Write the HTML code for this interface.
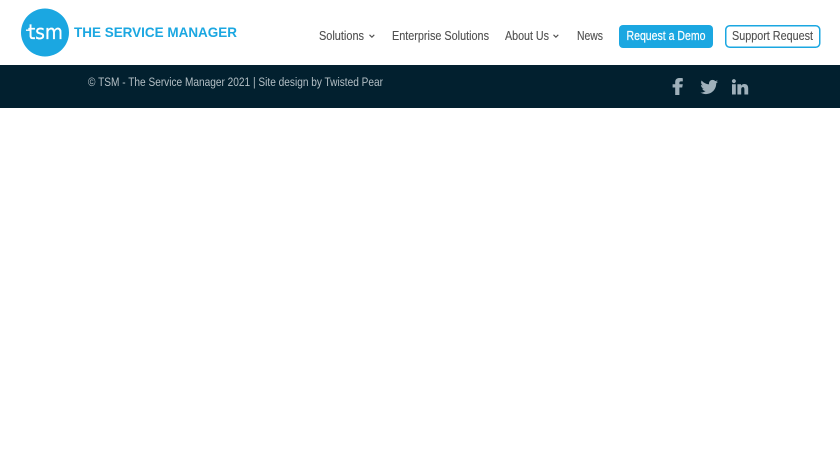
<!DOCTYPE html>
<html lang="en">
<head>
<meta charset="utf-8">
<title>TSM - The Service Manager</title>
<style>
html,body{margin:0;padding:0;background:#fff;width:840px;height:472px;overflow:hidden}
svg{display:block}
.nav{font-family:"Liberation Sans",sans-serif;font-size:12.6px;fill:#505050;stroke:#505050;stroke-width:.12px}
</style>
</head>
<body>
<svg width="840" height="472" viewBox="0 0 840 472" xmlns="http://www.w3.org/2000/svg">
<rect width="840" height="472" fill="#fff"/>
<circle cx="45" cy="32.5" r="24" fill="#1ba7e1"/>
<text x="28" y="39" font-family="DejaVu Sans,sans-serif" font-size="20" fill="#fff" stroke="#fff" stroke-width=".3" textLength="35" lengthAdjust="spacingAndGlyphs">tsm</text>
<path d="M26 30.2h4" stroke="#fff" stroke-width="1.4"/>
<text x="74" y="37.2" font-family="Liberation Sans,sans-serif" font-weight="700" font-size="13.6" fill="#1ba7e1" textLength="163" lengthAdjust="spacingAndGlyphs">THE SERVICE MANAGER</text>

<text class="nav" x="319" y="40" textLength="45" lengthAdjust="spacingAndGlyphs">Solutions</text>
<path d="M369.5 34.8l2.4 2.4 2.4-2.4" fill="none" stroke="#505050" stroke-width="1.1"/>
<text class="nav" x="392" y="40" textLength="97" lengthAdjust="spacingAndGlyphs">Enterprise Solutions</text>
<text class="nav" x="505" y="40" textLength="44" lengthAdjust="spacingAndGlyphs">About Us</text>
<path d="M553.5 34.8l2.4 2.4 2.4-2.4" fill="none" stroke="#505050" stroke-width="1.1"/>
<text class="nav" x="577" y="40" textLength="26" lengthAdjust="spacingAndGlyphs">News</text>

<rect x="619" y="25" width="94" height="23" rx="4" fill="#1ba7e1"/>
<text x="626.5" y="40" font-family="Liberation Sans,sans-serif" font-size="12.6" fill="#fff" stroke="#fff" stroke-width=".2" textLength="79" lengthAdjust="spacingAndGlyphs">Request a Demo</text>
<rect x="725.75" y="25.75" width="94" height="21.5" rx="4" fill="#fff" stroke="#1ba7e1" stroke-width="1.5"/>
<text class="nav" x="732" y="40" textLength="81" lengthAdjust="spacingAndGlyphs">Support Request</text>

<rect x="0" y="65" width="840" height="43" fill="#02202f"/>
<text x="88" y="86" font-family="Liberation Sans,sans-serif" font-size="12.4" fill="#b4bfc5" textLength="295" lengthAdjust="spacingAndGlyphs">© TSM - The Service Manager 2021 | Site design by Twisted Pear</text>

<path d="M675.2 95V87.5H672.6V84.2H675.2V82C675.2 79.3 677 78 679.6 78C680.9 78 682 78.1 682.8 78.2V81.4H681C679.8 81.4 679.4 81.9 679.4 82.8V84.2H682.8L682.2 87.5H679.4V95Z" fill="#9fb0ba"/>
<path d="M718 81.6C717.3 81.9 716.6 82.1 715.9 82.2C716.7 81.7 717.2 81 717.5 80.2C716.8 80.6 716 80.9 715.2 81.1C714.5 80.3 713.6 79.9 712.6 79.9C710.6 79.9 709 81.5 709 83.5C709 83.8 709 84.1 709.1 84.3C706.1 84.2 703.4 82.7 701.6 80.5C701.3 81.1 701.1 81.7 701.1 82.4C701.1 83.6 701.7 84.7 702.7 85.4C702.1 85.4 701.5 85.2 701 84.9V85C701 86.7 702.2 88.2 703.9 88.5C703.3 88.7 702.7 88.7 702.2 88.6C702.7 90 704 91 705.6 91C704.4 92 702.8 92.6 701.2 92.6C700.9 92.6 700.6 92.6 700.3 92.5C701.9 93.5 703.9 94.1 705.9 94.1C712.5 94.1 716.2 88.6 716.2 83.8V83.4C716.9 82.9 717.5 82.3 718 81.6Z" fill="#9fb0ba"/>
<path d="M732 84.3H735.8V94.5H732ZM733.9 79.1C735 79.1 735.9 80 735.9 81.1C735.9 82.2 735 83.1 733.9 83.1C732.8 83.1 731.9 82.2 731.9 81.1C731.9 80 732.8 79.1 733.9 79.1ZM737.4 84.3H741V85.7C741.6 84.7 742.8 84 744.2 84C747.4 84 748.2 86 748.2 88.8V94.5H744.4V89.6C744.4 88.2 744.2 87.1 742.9 87.1C741.6 87.1 741.2 88.2 741.2 89.6V94.5H737.4Z" fill="#9fb0ba"/>
</svg>
</body>
</html>
